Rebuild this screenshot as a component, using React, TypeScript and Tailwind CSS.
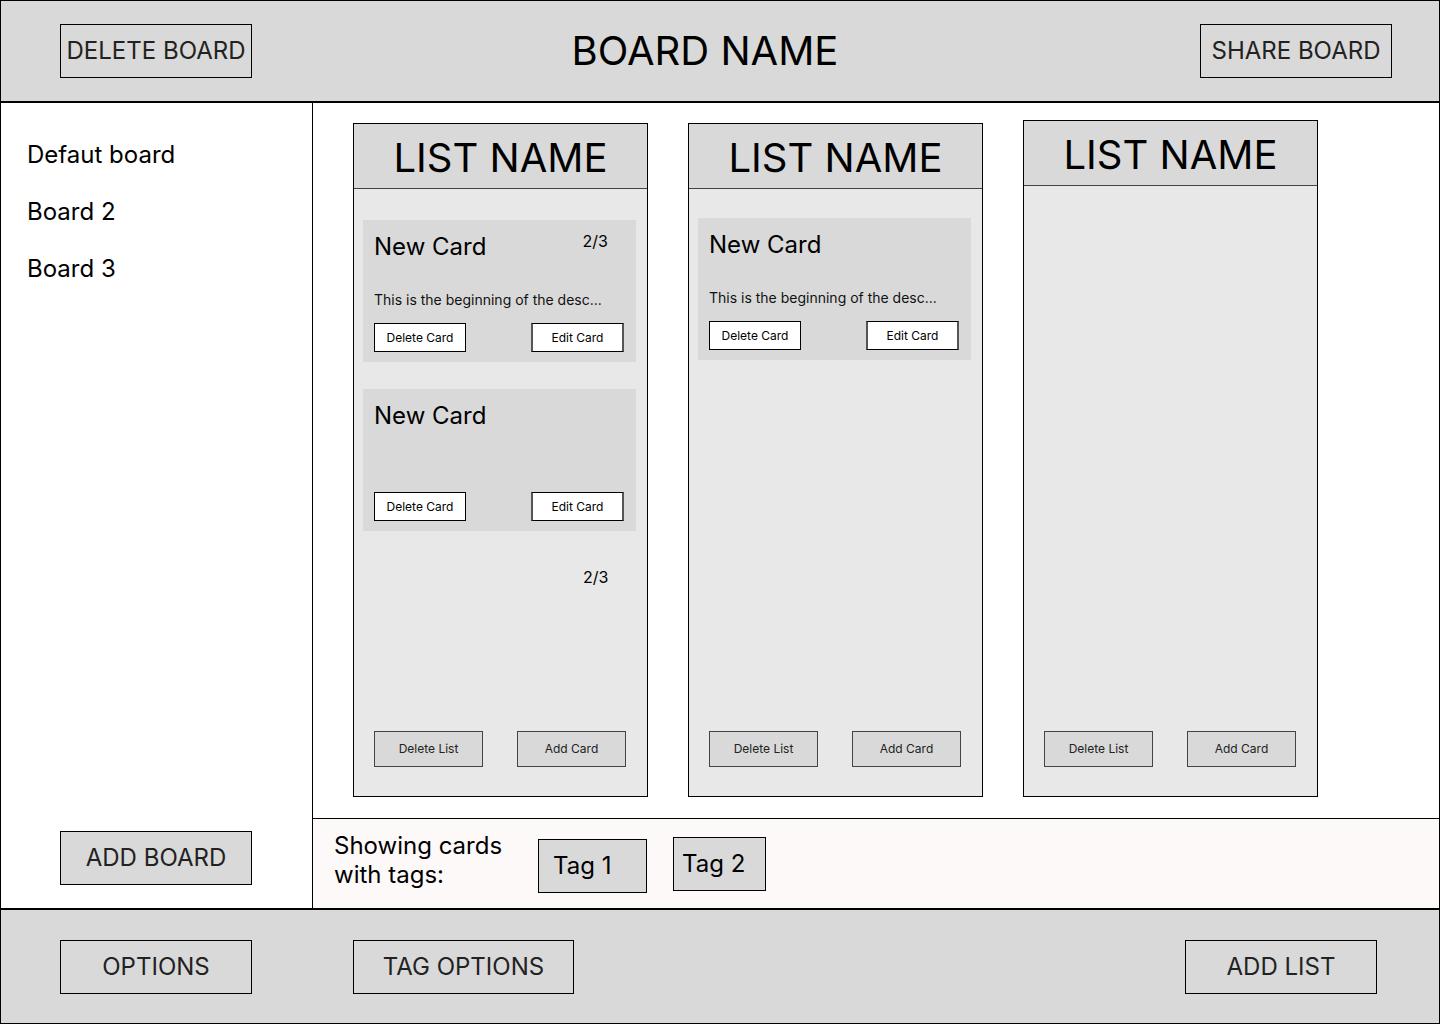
const font = { fontFamily: 'Inter, "Noto Sans", sans-serif' }

interface CardProps {
  title: string
  count?: string
  description?: string
}

const Card = ({ title, count, description }: CardProps) => {
  return (
    <div className="w-[273px] h-[142px] bg-[#d9d9d9] flex flex-col pt-[13px] pb-[10px] pl-[11px] pr-[12px]">
      <div className="flex justify-between items-start">
        <h3 className="text-[24px] leading-[28px] text-black">{title}</h3>
        {count && <span className="text-[16px] leading-[20px] -mt-[2px] mr-[16px] text-black">{count}</span>}
      </div>
      {description && <p className="mt-auto text-[14px] leading-[17px] text-[#111]">{description}</p>}
      <div className={`${description ? 'mt-[15px]' : 'mt-auto'} flex justify-between`}>
        <button className="w-[92px] h-[29px] bg-white border border-black text-[12px] text-black">Delete Card</button>
        <button className="w-[93px] h-[29px] bg-white border border-black border-x-[#555] border-x-2 text-[12px] text-black">Edit Card</button>
      </div>
    </div>
  )
}

interface ListProps {
  top: string
  height: string
  cardTop: string
  children?: React.ReactNode
}

const List = ({ top, height, cardTop, children }: ListProps) => {
  return (
    <div className={`w-[295px] ${top} ${height} bg-[#e8e8e8] border border-black flex flex-col`}>
      <div className="h-[65px] shrink-0 bg-[#d9d9d9] border-b border-[#444] flex items-center justify-center pt-[4px]">
        <h2 className="text-[40px] leading-none text-black">LIST NAME</h2>
      </div>
      <div className={`flex flex-col gap-[27px] pl-[9px] ${cardTop}`}>{children}</div>
      <div className="mt-auto mb-[29px] flex justify-between pl-[20px] pr-[21px]">
        <button className="w-[109px] h-[36px] bg-[#d9d9d9] border border-[#444] text-[12px] text-[#222]">Delete List</button>
        <button className="w-[109px] h-[36px] bg-[#d9d9d9] border border-[#444] text-[12px] text-[#222]">Add Card</button>
      </div>
    </div>
  )
}

const App = () => {
  return (
    <div style={font} className="w-[1440px] h-[1024px] border border-black flex flex-col bg-white overflow-hidden">
      {/* header */}
      <header className="h-[102px] shrink-0 bg-[#d9d9d9] border-b-2 border-black flex items-center pl-[59px] pr-[47px]">
        <button className="w-[192px] h-[54px] border border-black text-[24px] text-[#222]">DELETE BOARD</button>
        <h1 className="flex-1 text-center pr-[42px] text-[40px] leading-none text-black">BOARD NAME</h1>
        <button className="w-[192px] h-[54px] border border-black text-[24px] text-[#222]">SHARE BOARD</button>
      </header>

      <div className="flex flex-1 min-h-0">
        {/* sidebar */}
        <aside className="w-[312px] shrink-0 border-r border-black flex flex-col pt-[36px] pb-[23px]">
          <nav className="flex flex-col gap-[25px] pl-[26px]">
            <span className="text-[24px] leading-[32px] text-black">Defaut board</span>
            <span className="text-[24px] leading-[32px] text-black">Board 2</span>
            <span className="text-[24px] leading-[32px] text-black">Board 3</span>
          </nav>
          <button className="mt-auto ml-[59px] w-[192px] h-[54px] bg-[#d9d9d9] border border-black text-[24px] text-[#222]">ADD BOARD</button>
        </aside>

        {/* main */}
        <main className="flex-1 flex flex-col min-w-0">
          <div className="flex-1 flex items-start gap-[40px] pl-[40px]">
            <List top="mt-[20px]" height="h-[674px]" cardTop="mt-[31px]">
              <Card title="New Card" count="2/3" description="This is the beginning of the desc..." />
              <Card title="New Card" />
              <span className="pl-[220px] mt-[9px] text-[16px] leading-[20px] text-black">2/3</span>
            </List>
            <List top="mt-[20px]" height="h-[674px]" cardTop="mt-[29px]">
              <Card title="New Card" description="This is the beginning of the desc..." />
            </List>
            <List top="mt-[17px]" height="h-[677px]" cardTop="mt-0" />
          </div>

          <div className="h-[90px] shrink-0 bg-[#fdf9f9] border-t border-black flex items-center pl-[21px]">
            <p className="w-[204px] text-[24px] leading-[29px] text-black -mt-[7px]">Showing cards<br />with tags:</p>
            <div className="w-[109px] h-[54px] mt-[4px] bg-[#d9d9d9] border border-black flex items-center pl-[14px]">
              <span className="text-[24px] text-black">Tag 1</span>
            </div>
            <div className="w-[93px] h-[54px] ml-[26px] bg-[#d9d9d9] border border-black flex items-center pl-[8px]">
              <span className="text-[24px] text-black">Tag 2</span>
            </div>
          </div>
        </main>
      </div>

      {/* footer */}
      <footer className="h-[115px] shrink-0 bg-[#d9d9d9] border-t-2 border-black flex items-center pl-[59px] pr-[62px]">
        <button className="w-[192px] h-[54px] border border-black text-[24px] text-[#222]">OPTIONS</button>
        <button className="ml-[101px] w-[221px] h-[54px] border border-black text-[24px] text-[#222]">TAG OPTIONS</button>
        <button className="ml-auto w-[192px] h-[54px] border border-black text-[24px] text-[#222]">ADD LIST</button>
      </footer>
    </div>
  )
}

export default App
